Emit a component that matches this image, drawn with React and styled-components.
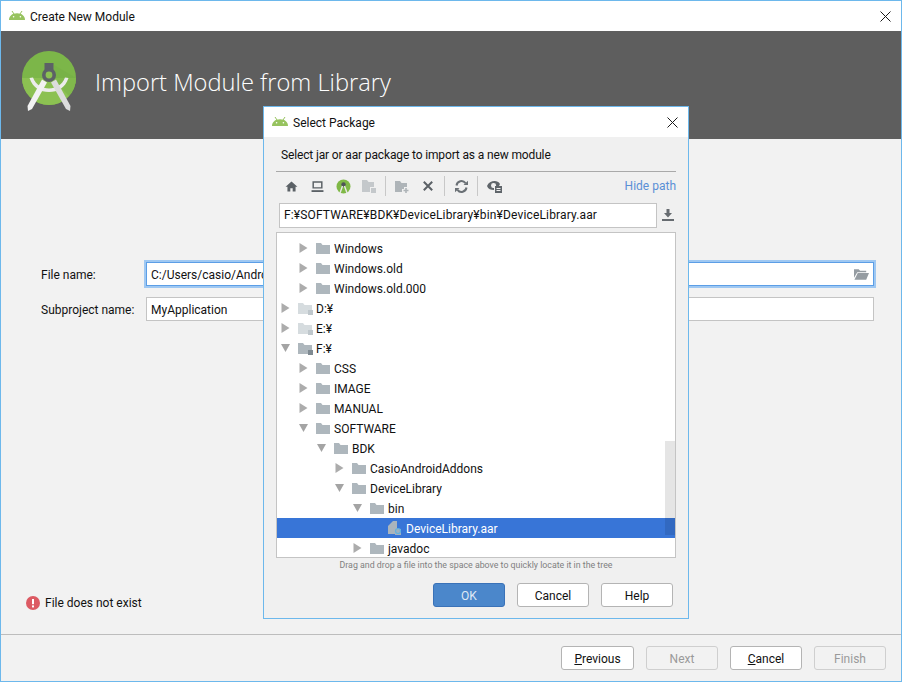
import React from "react";
import styled, { createGlobalStyle } from "styled-components";

const GlobalStyle = createGlobalStyle`
  html, body {
    margin: 0;
    padding: 0;
    background: #f2f2f2;
  }
  body {
    font-family: Roboto, "Noto Sans", sans-serif;
    font-size: 12px;
    color: #111;
  }
`;

const Window = styled.div`
  position: relative;
  width: 902px;
  height: 682px;
  box-sizing: border-box;
  border: 1px solid #6db8ec;
  background: #f2f2f2;
  display: flex;
  flex-direction: column;
  overflow: hidden;
`;

const TitleBar = styled.div`
  height: 30px;
  flex: none;
  background: #fff;
  display: flex;
  align-items: center;
  padding: 0 ${(p) => p.$right}px 0 ${(p) => p.$left}px;
  gap: 5px;
`;

const TitleText = styled.span`
  flex: 1;
  font-size: 12px;
  padding-top: 1px;
`;

const Banner = styled.div`
  height: 108px;
  flex: none;
  box-sizing: border-box;
  background: #5e5e5e;
  display: flex;
  align-items: flex-start;
  padding: 20px 0 0 21px;
  gap: 19px;
`;

const BannerTitle = styled.h1`
  margin: 15px 0 0;
  font-family: "Open Sans", sans-serif;
  font-weight: 300;
  font-size: 23.7px;
  color: #fff;
`;

const Form = styled.div`
  flex: 1;
  display: flex;
  flex-direction: column;
  padding: 123px 27px 0 40px;
  gap: 11px;
`;

const FormRow = styled.div`
  display: grid;
  grid-template-columns: 105px 1fr;
  align-items: center;
`;

const FieldLabel = styled.label`
  font-size: 12px;
  padding-top: 2px;
`;

const Field = styled.div`
  height: 24px;
  box-sizing: border-box;
  background: #fff;
  display: flex;
  align-items: center;
  justify-content: space-between;
  padding: 0 4px;
  font-size: 12px;
  border: 1px solid ${(p) => (p.$focused ? "#5c9ee6" : "#c4c4c4")};
  box-shadow: ${(p) => (p.$focused ? "0 0 0 2px #9fc8f2" : "none")};
`;

const FieldValue = styled.span`
  padding-top: 2px;
`;

const ErrorLine = styled.div`
  display: flex;
  align-items: center;
  gap: 5px;
  padding: 0 0 24px 25px;
  font-size: 12px;
`;

const Footer = styled.div`
  height: 47px;
  flex: none;
  box-sizing: border-box;
  border-top: 1px solid #bdbdbd;
  display: flex;
  justify-content: flex-end;
  align-items: flex-start;
  padding: 11px 15px 0 0;
  gap: 12px;
`;

const Button = styled.button`
  width: ${(p) => p.$width || 72}px;
  height: 24px;
  box-sizing: border-box;
  border-radius: 3px;
  font-family: inherit;
  font-size: 12px;
  padding: 2px 0 0;
  border: 1px solid ${(p) => (p.$primary ? "#3a72b8" : p.disabled ? "#cfcfcf" : "#b4b4b4")};
  background: ${(p) => (p.$primary ? "#4b87cb" : p.disabled ? "#f2f2f2" : "#fff")};
  color: ${(p) => (p.$primary ? "#dfe9f5" : p.disabled ? "#9a9a9a" : "#111")};
`;

const Mnemonic = styled.span`
  text-decoration: underline;
`;

const Dialog = styled.div`
  position: absolute;
  left: 262px;
  top: 105px;
  width: 426px;
  height: 513px;
  box-sizing: border-box;
  border: 1px solid #6db8ec;
  background: #f0f0f0;
  display: flex;
  flex-direction: column;
`;

const DialogBody = styled.div`
  flex: 1;
  display: flex;
  flex-direction: column;
  padding: 0 12px;
`;

const Prompt = styled.div`
  height: 34px;
  flex: none;
  display: flex;
  align-items: center;
  padding: 1px 0 0 5px;
  box-sizing: border-box;
  font-size: 12px;
  letter-spacing: -0.14px;
`;

const Toolbar = styled.div`
  height: 31px;
  flex: none;
  box-sizing: border-box;
  border-top: 1px solid #a9a9a9;
  display: flex;
  align-items: center;
  padding: 0 0 2px 2px;
`;

const ToolIcon = styled.span`
  width: 26px;
  height: 26px;
  display: flex;
  align-items: center;
  justify-content: center;
`;

const ToolSep = styled.span`
  width: 1px;
  height: 20px;
  background: #c8c8c8;
  margin: 0 3px;
`;

const HidePath = styled.span`
  margin-left: auto;
  color: #5a8fd6;
  font-size: 12px;
`;

const PathRow = styled.div`
  display: flex;
  align-items: center;
  height: 26px;
  flex: none;
  padding-left: 3px;
  gap: 5px;
`;

const PathField = styled(Field)`
  flex: 1;
  height: 25px;
  letter-spacing: 0.15px;
`;

const PathAction = styled.span`
  width: 12px;
  margin-right: 2px;
  display: flex;
  justify-content: center;
`;

const Tree = styled.div`
  position: relative;
  margin-top: 4px;
  height: 326px;
  flex: none;
  box-sizing: border-box;
  border: 1px solid #c4c4c4;
  background: #fff;
  padding-top: 5px;
  overflow: hidden;
`;

const TreeRow = styled.div`
  height: 20px;
  display: flex;
  align-items: center;
  padding-left: ${(p) => 4 + p.$level * 18}px;
  background: ${(p) => (p.$selected ? "#3875d7" : "transparent")};
  color: ${(p) => (p.$selected ? "#fff" : "#111")};
  font-size: 12px;
`;

const RowLabel = styled.span`
  padding-top: 2px;
`;

const Arrow = styled.span`
  width: 14px;
  flex: none;
  display: flex;
  justify-content: flex-start;
  margin-right: 2px;
`;

const RowIcon = styled.span`
  width: 16px;
  flex: none;
  display: flex;
  justify-content: center;
  margin-right: 3px;
`;

const ScrollThumb = styled.div`
  position: absolute;
  right: 0;
  top: 208px;
  width: 10px;
  height: 94px;
  background: rgba(0, 0, 0, 0.1);
`;

const Hint = styled.div`
  height: 14px;
  flex: none;
  text-align: center;
  font-size: 8.8px;
  color: #808080;
  line-height: 14px;
`;

const DialogButtons = styled.div`
  display: flex;
  justify-content: flex-end;
  padding: 11px 3px 0 0;
  gap: 12px;
`;

const AndroidSvg = styled.svg`
  margin-bottom: 2px;
  flex: none;
`;

const AndroidIcon = () => (
  <AndroidSvg width="16" height="9" viewBox="0 0 16 9">
    <path d="M0 9 C0 5 3 2.2 8 2.2 C13 2.2 16 5 16 9 Z" fill="#97c35f" />
    <path d="M3 0 L5 3 M13 0 L11 3" stroke="#97c35f" strokeWidth="1" />
    <circle cx="4.6" cy="5.8" r="0.8" fill="#fff" />
    <circle cx="11.4" cy="5.8" r="0.8" fill="#fff" />
  </AndroidSvg>
);

const CloseIcon = () => (
  <svg width="11" height="11" viewBox="0 0 11 11">
    <path d="M0.5 0.5 L10.5 10.5 M10.5 0.5 L0.5 10.5" stroke="#1a1a1a" strokeWidth="1" fill="none" />
  </svg>
);

const StudioLogo = () => (
  <svg width="54" height="60" viewBox="0 0 54 60">
    <circle cx="27" cy="27" r="27" fill="#7cb649" />
    <path d="M0 27 A27 27 0 0 0 54 27 Z" fill="#8cc152" />
    <path d="M32 14 L54 27 A27 27 0 0 1 47 45 L32 30 Z" fill="#74ad45" opacity="0.45" />
    <rect x="22.5" y="12" width="9" height="8" fill="#5c6166" />
    <circle cx="27" cy="24" r="7" fill="#5c6166" />
    <circle cx="27" cy="24" r="3.4" fill="#8cc152" />
    <path d="M7.5 27 C11 37 18 41 27 41 C36 41 43 37 46.5 27 L43 26.5 C40 34 34 37.5 27 37.5 C20 37.5 14 34 11 26.5 Z" fill="#ececec" />
    <path d="M20 28.5 L25 31.5 L10 58 L6 60 L5.5 55 Z" fill="#f2f2f2" />
    <path d="M34 28.5 L29 31.5 L44 58 L48 60 L48.5 55 Z" fill="#dcdcdc" />
  </svg>
);

const ErrorIcon = () => (
  <svg width="14" height="14" viewBox="0 0 14 14">
    <circle cx="7" cy="7" r="7" fill="#dc5a63" />
    <rect x="6" y="3" width="2" height="5.2" fill="#fff" />
    <rect x="6" y="9.4" width="2" height="2" fill="#fff" />
  </svg>
);

const FolderOpenIcon = () => (
  <svg width="15" height="12" viewBox="0 0 16 12">
    <path d="M0 1 H5 L6.5 2.5 H13 V4 H3.5 L0 10 Z" fill="#959ca2" />
    <path d="M4 5 H16 L13 12 H0.5 Z" fill="#959ca2" />
  </svg>
);

const Folder = ({ light, lock }) => (
  <svg width="16" height="13" viewBox="0 0 16 13">
    <path d="M1 1 H6 L7.5 3 H15 V12 H1 Z" fill={light ? "#d6dcdf" : "#aeb7bd"} />
    {lock && <rect x="11" y="8" width="5" height="5" fill={light ? "#bfc7cc" : "#7f8a92"} />}
  </svg>
);

const ArchiveIcon = () => (
  <svg width="16" height="16" viewBox="0 0 16 16">
    <path d="M1 6 L6 1 H10 V14 H1 Z" fill="#aab4bc" />
    <rect x="8" y="9" width="6" height="6" fill="#9fb0bf" />
    <circle cx="11" cy="11" r="2.5" fill="none" stroke="#5fb1e0" strokeWidth="1.2" />
  </svg>
);

const TreeArrow = ({ open }) => (
  <svg width="9" height="10" viewBox="0 0 9 10">
    {open ? (
      <path d="M0 1 H9 L4.5 9 Z" fill="#a4a4a4" />
    ) : (
      <path d="M0.5 0 L8.5 5 L0.5 10 Z" fill="#acacac" />
    )}
  </svg>
);

const HomeIcon = () => (
  <svg width="13" height="11" viewBox="0 0 14 13">
    <path d="M7 0.5 L14 6.8 H11.8 V12.5 H8.4 V8.5 H5.6 V12.5 H2.2 V6.8 H0 Z" fill="#5b6166" />
  </svg>
);

const DesktopIcon = () => (
  <svg width="13" height="11" viewBox="0 0 13 12">
    <path d="M1.8 1 H11.2 V7.5 H1.8 Z" fill="none" stroke="#5b6166" strokeWidth="1.6" />
    <rect x="0" y="10" width="13" height="2" fill="#5b6166" />
  </svg>
);

const ProjectIcon = () => (
  <svg width="15" height="15" viewBox="0 0 15 15">
    <circle cx="7.5" cy="7.5" r="7" fill="#7fb846" />
    <circle cx="7.5" cy="5.5" r="2.2" fill="#4f5458" />
    <path d="M6.5 7 L4 14 M8.5 7 L11 14" stroke="#e8e8e8" strokeWidth="1.4" />
  </svg>
);

const ModuleIcon = () => (
  <svg width="15" height="14" viewBox="0 0 15 14">
    <path d="M0 1 H5 L6.5 3 H12 V8 H8 V13 H0 Z" fill="#c4c8cb" />
    <rect x="9" y="9" width="5" height="5" fill="#c4c8cb" />
  </svg>
);

const NewFolderIcon = () => (
  <svg width="15" height="13" viewBox="0 0 15 13">
    <path d="M0 1 H5 L6.5 3 H12 V7 H9 V9 H7 V12 H0 Z" fill="#aeb4b8" />
    <path d="M11 8 V13 M8.5 10.5 H13.5" stroke="#aeb4b8" strokeWidth="1.6" />
  </svg>
);

const DeleteIcon = () => (
  <svg width="10" height="10" viewBox="0 0 10 10">
    <path d="M0.8 0.8 L9.2 9.2 M9.2 0.8 L0.8 9.2" stroke="#5b6166" strokeWidth="2" />
  </svg>
);

const RefreshIcon = () => (
  <svg width="13" height="13" viewBox="0 0 13 13" fill="none">
    <path d="M1.5 5.5 A5 5 0 0 1 10.5 3.2" stroke="#6a7075" strokeWidth="2" />
    <path d="M11.5 7.5 A5 5 0 0 1 2.5 9.8" stroke="#6a7075" strokeWidth="2" />
    <path d="M8.5 5 H13 V0.8 Z M4.5 8 H0 V12.2 Z" fill="#6a7075" />
  </svg>
);

const ShowHiddenIcon = () => (
  <svg width="15" height="13" viewBox="0 0 15 13">
    <path d="M0 6 C2 1 10 -1 13 4 L12 6 H9 A2.5 2.5 0 1 0 7 8 V10 C4 10 1 9 0 6 Z" fill="#5f656a" />
    <rect x="8" y="6" width="7" height="7" fill="#5f656a" />
    <path d="M9.5 8.5 H13.5 M9.5 10.5 H13.5" stroke="#f0f0f0" strokeWidth="1" />
  </svg>
);

const DownloadIcon = () => (
  <svg width="12" height="12" viewBox="0 0 12 12">
    <path d="M4.5 0 H7.5 V4 H10 L6 8.5 L2 4 H4.5 Z" fill="#666b70" />
    <rect x="0" y="10" width="12" height="2" fill="#666b70" />
  </svg>
);

const rows = [
  { level: 1, name: "Windows" },
  { level: 1, name: "Windows.old" },
  { level: 1, name: "Windows.old.000" },
  { level: 0, name: "D:¥", drive: "light" },
  { level: 0, name: "E:¥", drive: "light" },
  { level: 0, name: "F:¥", drive: "dark", open: true },
  { level: 1, name: "CSS" },
  { level: 1, name: "IMAGE" },
  { level: 1, name: "MANUAL" },
  { level: 1, name: "SOFTWARE", open: true },
  { level: 2, name: "BDK", open: true },
  { level: 3, name: "CasioAndroidAddons" },
  { level: 3, name: "DeviceLibrary", open: true },
  { level: 4, name: "bin", open: true },
  { level: 5, name: "DeviceLibrary.aar", file: true, selected: true },
  { level: 4, name: "javadoc" },
];

function App() {
  return (
    <>
      <GlobalStyle />
      <Window>
        <TitleBar $left={8} $right={10}>
          <AndroidIcon />
          <TitleText>Create New Module</TitleText>
          <CloseIcon />
        </TitleBar>
        <Banner>
          <StudioLogo />
          <BannerTitle>Import Module from Library</BannerTitle>
        </Banner>
        <Form>
          <FormRow>
            <FieldLabel>File name:</FieldLabel>
            <Field $focused>
              <FieldValue>C:/Users/casio/Andro</FieldValue>
              <FolderOpenIcon />
            </Field>
          </FormRow>
          <FormRow>
            <FieldLabel>Subproject name:</FieldLabel>
            <Field>
              <FieldValue>MyApplication</FieldValue>
            </Field>
          </FormRow>
        </Form>
        <ErrorLine>
          <ErrorIcon />
          File does not exist
        </ErrorLine>
        <Footer>
          <Button $width={73}>
            <Mnemonic>P</Mnemonic>revious
          </Button>
          <Button disabled>Next</Button>
          <Button>
            <Mnemonic>C</Mnemonic>ancel
          </Button>
          <Button disabled>Finish</Button>
        </Footer>

        <Dialog>
          <TitleBar $left={8} $right={10}>
            <AndroidIcon />
            <TitleText>Select Package</TitleText>
            <CloseIcon />
          </TitleBar>
          <DialogBody>
            <Prompt>Select jar or aar package to import as a new module</Prompt>
            <Toolbar>
              <ToolIcon><HomeIcon /></ToolIcon>
              <ToolIcon><DesktopIcon /></ToolIcon>
              <ToolIcon><ProjectIcon /></ToolIcon>
              <ToolIcon><ModuleIcon /></ToolIcon>
              <ToolSep />
              <ToolIcon><NewFolderIcon /></ToolIcon>
              <ToolIcon><DeleteIcon /></ToolIcon>
              <ToolSep />
              <ToolIcon><RefreshIcon /></ToolIcon>
              <ToolSep />
              <ToolIcon><ShowHiddenIcon /></ToolIcon>
              <HidePath>Hide path</HidePath>
            </Toolbar>
            <PathRow>
              <PathField>
                <span>F:¥SOFTWARE¥BDK¥DeviceLibrary¥bin¥DeviceLibrary.aar</span>
              </PathField>
              <PathAction><DownloadIcon /></PathAction>
            </PathRow>
            <Tree>
              {rows.map((row) => (
                <TreeRow key={row.name + row.level} $level={row.level} $selected={row.selected}>
                  <Arrow>{!row.file && <TreeArrow open={row.open} />}</Arrow>
                  <RowIcon>
                    {row.file ? (
                      <ArchiveIcon />
                    ) : (
                      <Folder light={row.drive === "light"} lock={!!row.drive} />
                    )}
                  </RowIcon>
                  <RowLabel>{row.name}</RowLabel>
                </TreeRow>
              ))}
              <ScrollThumb />
            </Tree>
            <Hint>Drag and drop a file into the space above to quickly locate it in the tree</Hint>
            <DialogButtons>
              <Button $primary>OK</Button>
              <Button>Cancel</Button>
              <Button>Help</Button>
            </DialogButtons>
          </DialogBody>
        </Dialog>
      </Window>
    </>
  );
}

export default App;
